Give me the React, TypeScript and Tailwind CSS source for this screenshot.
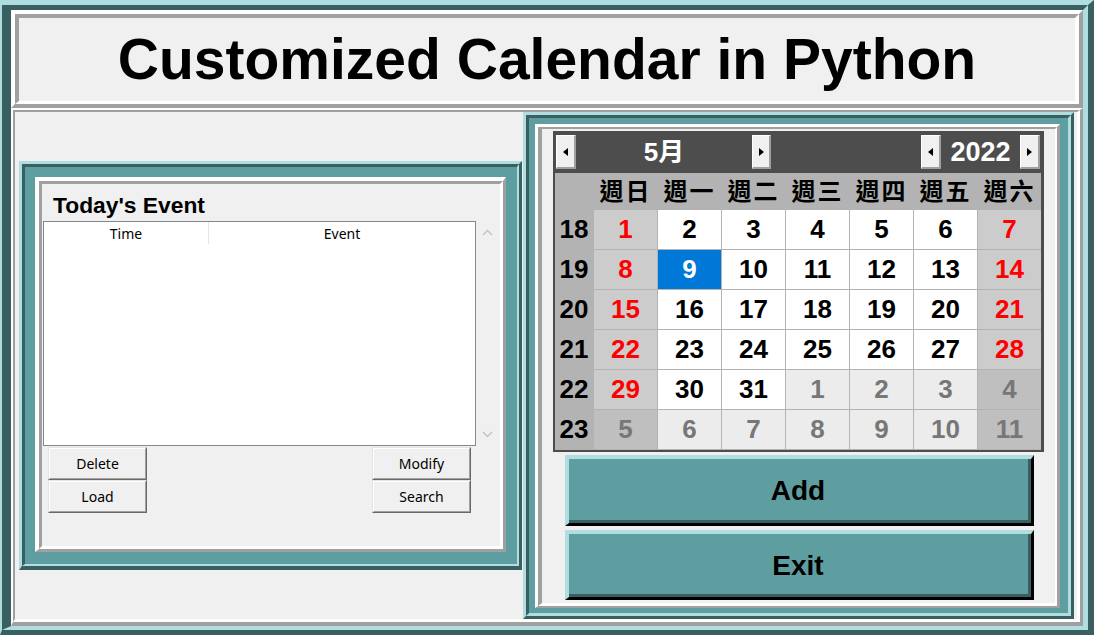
import React from 'react'

type Kind = 'norm' | 'we' | 'om' | 'omwe' | 'sel'
type Cell = { d: number; k: Kind }

const weeks: { wk: number; cells: Cell[] }[] = [
  { wk: 18, cells: [{ d: 1, k: 'we' }, { d: 2, k: 'norm' }, { d: 3, k: 'norm' }, { d: 4, k: 'norm' }, { d: 5, k: 'norm' }, { d: 6, k: 'norm' }, { d: 7, k: 'we' }] },
  { wk: 19, cells: [{ d: 8, k: 'we' }, { d: 9, k: 'sel' }, { d: 10, k: 'norm' }, { d: 11, k: 'norm' }, { d: 12, k: 'norm' }, { d: 13, k: 'norm' }, { d: 14, k: 'we' }] },
  { wk: 20, cells: [{ d: 15, k: 'we' }, { d: 16, k: 'norm' }, { d: 17, k: 'norm' }, { d: 18, k: 'norm' }, { d: 19, k: 'norm' }, { d: 20, k: 'norm' }, { d: 21, k: 'we' }] },
  { wk: 21, cells: [{ d: 22, k: 'we' }, { d: 23, k: 'norm' }, { d: 24, k: 'norm' }, { d: 25, k: 'norm' }, { d: 26, k: 'norm' }, { d: 27, k: 'norm' }, { d: 28, k: 'we' }] },
  { wk: 22, cells: [{ d: 29, k: 'we' }, { d: 30, k: 'norm' }, { d: 31, k: 'norm' }, { d: 1, k: 'om' }, { d: 2, k: 'om' }, { d: 3, k: 'om' }, { d: 4, k: 'omwe' }] },
  { wk: 23, cells: [{ d: 5, k: 'omwe' }, { d: 6, k: 'om' }, { d: 7, k: 'om' }, { d: 8, k: 'om' }, { d: 9, k: 'om' }, { d: 10, k: 'om' }, { d: 11, k: 'omwe' }] },
]

const cellClass: Record<Kind, string> = {
  norm: 'bg-white text-black',
  we: 'bg-[#cccccc] text-[#ff0000]',
  om: 'bg-[#ececec] text-[#777777]',
  omwe: 'bg-[#bfbfbf] text-[#777777]',
  sel: 'bg-[#0078d7] text-white',
}

const days = ['週日', '週一', '週二', '週三', '週四', '週五', '週六']

function ArrowBtn({ dir, w }: { dir: 'l' | 'r'; w: string }) {
  return (
    <div className={`${w} h-[34px] shrink-0 bg-[#f0f0f0] border-t border-l border-t-white border-l-white border-b-2 border-r-2 border-b-[#a0a0a0] border-r-[#a0a0a0] flex items-center justify-center`}>
      <svg width="5" height="8" viewBox="0 0 5 8">
        <path d={dir === 'l' ? 'M5 0 L0 4 L5 8Z' : 'M0 0 L5 4 L0 8Z'} fill="#000" />
      </svg>
    </div>
  )
}

function SmallBtn({ label }: { label: string }) {
  return (
    <div className="w-[99px] h-[33px] border-t border-l border-t-[#e3e3e3] border-l-[#e3e3e3] border-b border-r border-b-[#696969] border-r-[#696969]">
      <div className="h-full flex items-center justify-center bg-[#f0f0f0] border-t border-l border-t-white border-l-white border-b border-r border-b-[#a0a0a0] border-r-[#a0a0a0] text-[14px] text-black font-['Noto_Sans',sans-serif]">
        {label}
      </div>
    </div>
  )
}

function BigBtn({ label, h }: { label: string; h: string }) {
  return (
    <div className={`w-[469px] ${h} border-t-4 border-l-4 border-t-[#afdde0] border-l-[#afdde0] border-b-[3px] border-r-[3px] border-b-black border-r-black`}>
      <div className="h-full flex items-center justify-center pt-[3px] bg-[#5f9ea0] border-b-[3px] border-r-[3px] border-b-[#395f60] border-r-[#395f60] text-[28px] font-bold text-black">
        {label}
      </div>
    </div>
  )
}

function Calendar() {
  return (
    <div className="w-[491px] bg-[#4d4d4d] pl-[2px] pr-[3px] pb-[2px] font-['Liberation_Sans','Noto_Sans_CJK_TC',sans-serif] font-bold">
      <div className="h-[42px] flex items-center px-[1px]">
        <ArrowBtn dir="l" w="w-[20px]" />
        <div className="w-[176px] text-center text-white text-[26px] leading-none">5月</div>
        <ArrowBtn dir="r" w="w-[19px]" />
        <div className="flex-1" />
        <ArrowBtn dir="l" w="w-[20px]" />
        <div className="w-[79px] text-center text-white text-[27px] leading-none">2022</div>
        <ArrowBtn dir="r" w="w-[20px]" />
      </div>
      <div className="h-[37px] grid grid-cols-[38px_repeat(7,63px)] gap-x-px bg-[#b3b3b3] items-center">
        <div />
        {days.map((d) => (
          <div key={d} className="text-center text-[24px] leading-none tracking-[2px] text-black">{d}</div>
        ))}
      </div>
      <div className="grid grid-cols-[38px_repeat(7,63px)] grid-rows-[repeat(6,39px)] gap-px pb-px bg-[#b3b3b3] text-[26px]">
        {weeks.map((w) => (
          <React.Fragment key={w.wk}>
            <div className="flex items-center justify-center text-black bg-[#b3b3b3]">{w.wk}</div>
            {w.cells.map((c, i) => (
              <div key={i} className={`flex items-center justify-center ${cellClass[c.k]}`}>{c.d}</div>
            ))}
          </React.Fragment>
        ))}
      </div>
    </div>
  )
}

export default function App() {
  return (
    <div className="w-[1094px] h-[635px] overflow-hidden bg-[#f0f0f0] font-['Liberation_Sans',Arial,sans-serif] border-t-[5px] border-l-[2px] border-b-[5px] border-r-[6px] border-t-[#afdde0] border-l-[#afdde0] border-b-[#395f60] border-r-[#395f60]">
      <div className="h-full flex flex-col border-t-[5px] border-l-[9px] border-b-[4px] border-r-[5px] border-t-[#395f60] border-l-[#395f60] border-b-[#afdde0] border-r-[#afdde0]">
        {/* title */}
        <div className="h-[98px] shrink-0 border-t-4 border-l-4 border-t-white border-l-white border-b-4 border-r-4 border-b-[#a0a0a0] border-r-[#a0a0a0]">
          <div className="h-full flex items-center justify-center border-t-4 border-l-4 border-t-[#a0a0a0] border-l-[#a0a0a0] border-b-[3px] border-r-4 border-b-white border-r-white">
            <h1 className="text-[57px] font-bold text-black leading-none">Customized Calendar in Python</h1>
          </div>
        </div>

        {/* lower area */}
        <div className="flex-1 border-t-2 border-l-2 border-t-white border-l-white border-b-4 border-r-[3px] border-b-[#a0a0a0] border-r-[#a0a0a0]">
          <div className="h-full flex border-t-2 border-l-2 border-t-[#a0a0a0] border-l-[#a0a0a0] border-b-[3px] border-r-[3px] border-b-white border-r-white">
            {/* left */}
            <div className="w-[508px] shrink-0 flex items-center pl-[4px]">
              <div className="w-[503px] h-[409px] border-t-[3px] border-l-[3px] border-t-[#afdde0] border-l-[#afdde0] border-b-4 border-r-[3px] border-b-[#395f60] border-r-[#395f60]">
                <div className="h-full bg-[#5f9ea0] pt-[10px] pl-[10px] pr-[11px] pb-[12px] border-t-[3px] border-l-[3px] border-t-[#395f60] border-l-[#395f60] border-b-2 border-r-2 border-b-[#afdde0] border-r-[#afdde0]">
                  <div className="h-full border-t-4 border-l-4 border-t-white border-l-white border-b-[3px] border-r-[3px] border-b-[#a0a0a0] border-r-[#a0a0a0]">
                    <div className="h-full bg-[#f0f0f0] flex flex-col border-t-[3px] border-l-[3px] border-t-[#a0a0a0] border-l-[#a0a0a0] border-b-[3px] border-r-[3px] border-b-white border-r-white">
                      <div className="h-[26px] mt-[8px] pl-[11px] text-[22.8px] leading-[26px] font-bold text-black">Today's Event</div>
                      <div className="flex mt-[3px] pl-px">
                        <div className="w-[433px] h-[225px] bg-white border border-[#828790] font-['Noto_Sans',sans-serif] text-[14px] text-black">
                          <div className="h-[22px] flex">
                            <div className="w-[165px] flex items-center justify-center border-r border-r-[#e5e5e5]">Time</div>
                            <div className="flex-1 flex items-center justify-center">Event</div>
                          </div>
                        </div>
                        <div className="w-[22px] h-[225px] flex flex-col items-center justify-between py-[8px]">
                          <svg width="11" height="7" viewBox="0 0 11 7">
                            <polyline points="1,6 5.5,1.5 10,6" fill="none" stroke="#c4c4c4" strokeWidth="1.5" />
                          </svg>
                          <svg width="11" height="7" viewBox="0 0 11 7">
                            <polyline points="1,1 5.5,5.5 10,1" fill="none" stroke="#c4c4c4" strokeWidth="1.5" />
                          </svg>
                        </div>
                      </div>
                      <div className="flex justify-between mt-px pl-[6px] pr-[29px]">
                        <div className="flex flex-col">
                          <SmallBtn label="Delete" />
                          <SmallBtn label="Load" />
                        </div>
                        <div className="flex flex-col">
                          <SmallBtn label="Modify" />
                          <SmallBtn label="Search" />
                        </div>
                      </div>
                    </div>
                  </div>
                </div>
              </div>
            </div>

            {/* right */}
            <div className="w-[551px] shrink-0 h-full border-t-[3px] border-l-[3px] border-t-[#afdde0] border-l-[#afdde0] border-b-[3px] border-r-[3px] border-b-[#395f60] border-r-[#395f60]">
              <div className="h-full bg-[#5f9ea0] pt-[6px] pl-[6px] pr-[8px] pb-[5px] border-t-[3px] border-l-[3px] border-t-[#395f60] border-l-[#395f60] border-b-[3px] border-r-[3px] border-b-[#afdde0] border-r-[#afdde0]">
                <div className="h-full border-t-[3px] border-l-[3px] border-t-white border-l-white border-b-[2px] border-r-[3px] border-b-[#a0a0a0] border-r-[#a0a0a0]">
                  <div className="h-full bg-[#f0f0f0] flex flex-col items-center pt-[2px] border-t-[2px] border-l-[4px] border-t-[#a0a0a0] border-l-[#a0a0a0] border-b-[3px] border-r-[2px] border-b-white border-r-white">
                    <Calendar />
                    <div className="mt-[3px] pl-[1px]">
                      <BigBtn label="Add" h="h-[71px]" />
                    </div>
                    <div className="mt-[4px] pl-[1px]">
                      <BigBtn label="Exit" h="h-[70px]" />
                    </div>
                  </div>
                </div>
              </div>
            </div>
          </div>
        </div>
      </div>
    </div>
  )
}
